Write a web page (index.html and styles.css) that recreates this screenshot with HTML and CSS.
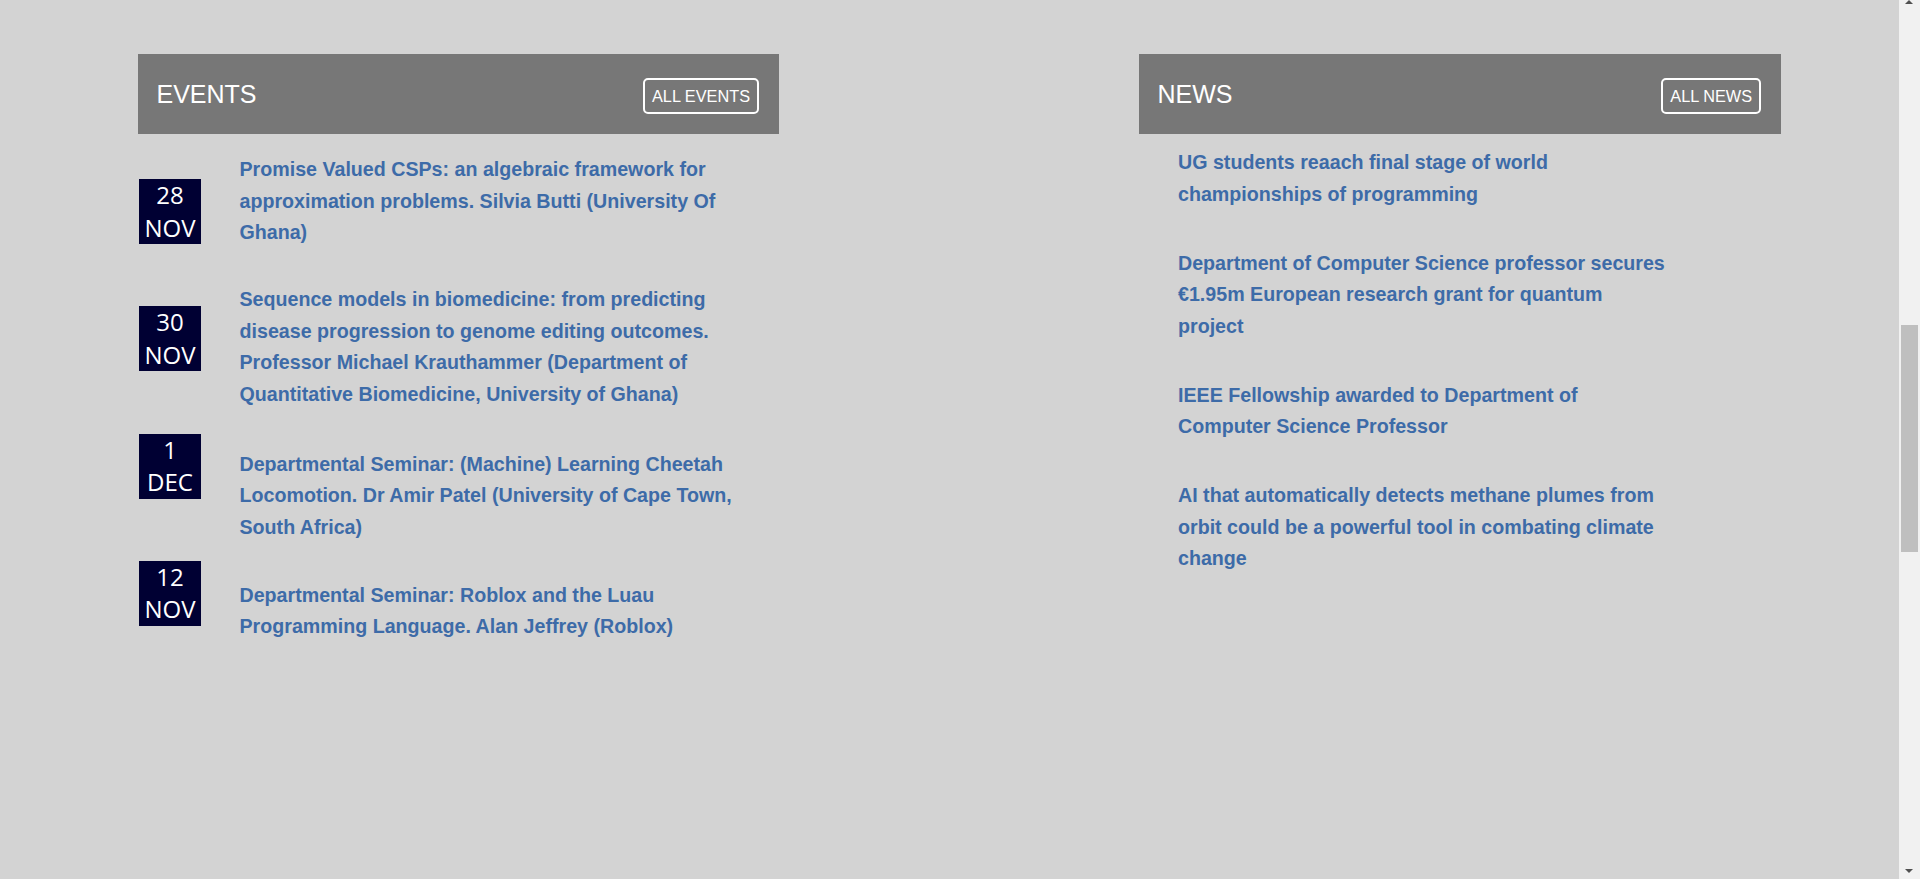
FILE: index.html
```html
<!DOCTYPE html>
<html lang="en">
<head>
<meta charset="utf-8">
<title>Events and News</title>
<link rel="stylesheet" href="styles.css">
</head>
<body>
<div class="page">
  <section class="col">
    <div class="col-head">
      <h2 class="col-title">EVENTS</h2>
      <a class="btn" href="#">ALL EVENTS</a>
    </div>
    <ul class="event-list">
      <li class="event">
        <div class="date">28<br>NOV</div>
        <a class="title" href="#">Promise Valued CSPs: an algebraic framework for approximation problems. Silvia Butti (University Of Ghana)</a>
      </li>
      <li class="event">
        <div class="date">30<br>NOV</div>
        <a class="title" href="#">Sequence models in biomedicine: from predicting disease progression to genome editing outcomes. Professor Michael Krauthammer (Department of Quantitative Biomedicine, University of Ghana)</a>
      </li>
      <li class="event">
        <div class="date">1<br>DEC</div>
        <a class="title" href="#">Departmental Seminar: (Machine) Learning Cheetah Locomotion. Dr Amir Patel (University of Cape Town, South Africa)</a>
      </li>
      <li class="event">
        <div class="date">12<br>NOV</div>
        <a class="title" href="#">Departmental Seminar: Roblox and the Luau Programming Language. Alan Jeffrey (Roblox)</a>
      </li>
    </ul>
  </section>
  <section class="col">
    <div class="col-head">
      <h2 class="col-title">NEWS</h2>
      <a class="btn" href="#">ALL NEWS</a>
    </div>
    <ul class="news-list">
      <li class="news-item"><a class="title" href="#">UG students reaach final stage of world championships of programming</a></li>
      <li class="news-item"><a class="title" href="#">Department of Computer Science professor secures €1.95m European research grant for quantum project</a></li>
      <li class="news-item"><a class="title" href="#">IEEE Fellowship awarded to Department of Computer Science Professor</a></li>
      <li class="news-item"><a class="title" href="#">AI that automatically detects methane plumes from orbit could be a powerful tool in combating climate change</a></li>
    </ul>
  </section>
</div>
<div class="scrollbar" aria-hidden="true">
  <span class="arrow arrow-up"></span>
  <span class="thumb"></span>
  <span class="arrow arrow-down"></span>
</div>
</body>
</html>
```
FILE: styles.css
```css
* { box-sizing: border-box; }
html, body {
  margin: 0;
  height: 879px;
  overflow: hidden;
  background: #d3d3d3;
  font-family: "Liberation Sans", Arial, sans-serif;
}
.page {
  display: grid;
  grid-template-columns: 641px 642px;
  column-gap: 360px;
  padding: 54px 0 0 138px;
}
.col-head {
  height: 80px;
  background: #777777;
  display: flex;
  align-items: center;
  justify-content: space-between;
  padding: 0 20px 0 18.5px;
}
.col-title {
  margin: 0;
  font-size: 25px;
  font-weight: normal;
  color: #ffffff;
}
.btn {
  display: flex;
  align-items: center;
  height: 36px;
  margin-top: 4px;
  padding: 0 7px;
  border: 2px solid #ffffff;
  border-radius: 5px;
  color: #ffffff;
  font-size: 16.3px;
  text-decoration: none;
}
.event-list, .news-list {
  list-style: none;
  margin: 0;
  padding: 0;
}
.event-list { padding: 20px 20px 0 1px; }
.event {
  display: flex;
  align-items: flex-start;
  gap: 38.5px;
}
.date {
  flex: 0 0 62px;
  width: 62px;
  height: 65px;
  background: #000033;
  color: #ffffff;
  font-family: "Open Sans", "DejaVu Sans", sans-serif;
  font-size: 24px;
  line-height: 32.5px;
  text-align: center;
}
.title {
  display: block;
  color: #3d6ba8;
  font-weight: bold;
  font-size: 19.65px;
  line-height: 31.67px;
  text-decoration: none;
}
.event .title { flex: 1; }
.event:nth-child(1) { margin-bottom: 35px; }
.event:nth-child(1) .date { margin-top: 25px; }
.event:nth-child(2) { margin-bottom: 23.2px; }
.event:nth-child(2) .date { margin-top: 22px; }
.event:nth-child(3) { margin-bottom: 17.3px; }
.event:nth-child(3) .title { margin-top: 14.7px; }
.event:nth-child(4) .title { margin-top: 18.7px; }

.news-list { padding: 13.4px 0 0 39px; }
.news-item { width: 492px; margin-bottom: 37px; }

.scrollbar {
  position: fixed;
  top: 0;
  right: 0;
  width: 21px;
  height: 879px;
  background: #f1f1f1;
}
.thumb {
  position: absolute;
  left: 2px;
  top: 325px;
  width: 17px;
  height: 227px;
  background: #bfbfbf;
}
.arrow {
  position: absolute;
  left: 6px;
  width: 0;
  height: 0;
  border-left: 4.5px solid transparent;
  border-right: 4.5px solid transparent;
}
.arrow-up { top: 0; border-bottom: 4px solid #505050; }
.arrow-down { top: 869px; border-top: 4px solid #505050; }
```
